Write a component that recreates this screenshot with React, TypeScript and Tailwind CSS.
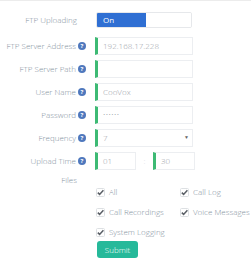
import React from "react";

const Info = () => (
  <span className="ml-[2px] inline-flex h-[8px] w-[8px] items-center justify-center rounded-full bg-[#4f78bd] text-[6px] font-bold leading-none text-white">
    ?
  </span>
);

const Label = ({ text, info = true }: { text: string; info?: boolean }) => (
  <div className={`flex w-[86px] items-center justify-end whitespace-nowrap ${info ? "" : "pr-[9px]"}`}>
    <span>{text}</span>
    {info && <Info />}
  </div>
);

const Field = ({ children }: { children?: React.ReactNode }) => (
  <div className="flex h-[18px] w-[98px] items-center border border-[#eceef1] border-l-[3px] border-l-[#3dba74] bg-white pl-[5px] text-[8px] text-[#9aa1a8]">
    {children}
  </div>
);

const Check = ({ text }: { text: string }) => (
  <div className="flex items-center gap-[4px] whitespace-nowrap">
    <svg width="9" height="9" viewBox="0 0 9 9">
      <rect x="0.5" y="0.5" width="8" height="8" rx="1" fill="#fff" stroke="#dde0e3" />
      <path d="M1.8 4.6 L3.6 6.4 L7.4 2.2" fill="none" stroke="#5a5f66" strokeWidth="1.5" />
    </svg>
    <span>{text}</span>
  </div>
);

export default function App() {
  return (
    <div className="h-[259px] w-[251px] overflow-hidden border-t border-[#ececec] bg-white text-[8px] font-light text-[#8592a0]" style={{ fontFamily: '"Open Sans", sans-serif' }}>
      <div className="flex flex-col pt-[10px]">
        <div className="flex h-[18px] items-center">
          <Label text="FTP Uploading" info={false} />
          <div className="ml-[10px] flex h-[16px] w-[96px] overflow-hidden rounded-[2px] border border-[#e6e8eb]">
            <div className="flex w-[49px] items-center bg-[#2f6fd3] pl-[6px] text-[8px] font-normal text-white">On</div>
            <div className="flex-1 bg-white" />
          </div>
        </div>
        <div className="mt-[8px] flex flex-col gap-[5px]">
          <div className="flex h-[18px] items-center">
            <Label text="FTP Server Address" />
            <div className="ml-[9px]"><Field>192.168.17.228</Field></div>
          </div>
          <div className="flex h-[18px] items-center">
            <Label text="FTP Server Path" />
            <div className="ml-[9px]"><Field /></div>
          </div>
          <div className="flex h-[18px] items-center">
            <Label text="User Name" />
            <div className="ml-[9px]"><Field>CooVox</Field></div>
          </div>
          <div className="flex h-[18px] items-center">
            <Label text="Password" />
            <div className="ml-[9px]"><Field><span className="text-[6px] tracking-[0.5px]">••••••</span></Field></div>
          </div>
          <div className="flex h-[18px] items-center">
            <Label text="Frequency" />
            <div className="ml-[9px]">
              <Field>
                <span className="flex-1">7</span>
                <span className="pr-[3px] text-[5px] text-[#666]">▼</span>
              </Field>
            </div>
          </div>
          <div className="flex h-[18px] items-center">
            <Label text="Upload Time" />
            <div className="ml-[9px] flex items-center">
              <div className="flex h-[18px] w-[41px] items-center border border-[#eceef1] border-l-[3px] border-l-[#3dba74] pl-[5px] text-[#9aa1a8]">01</div>
              <span className="w-[17px] text-center text-[#d0d4d8]">:</span>
              <div className="flex h-[18px] w-[42px] items-center border border-[#eceef1] border-l-[3px] border-l-[#3dba74] pl-[5px] text-[#9aa1a8]">30</div>
            </div>
          </div>
        </div>
        <div className="mt-[4px] flex h-[12px] items-center">
          <Label text="Files" info={false} />
        </div>
        <div className="ml-[96px] grid grid-cols-[84px_auto] gap-y-[8px]">
          <Check text="All" />
          <Check text="Call Log" />
          <Check text="Call Recordings" />
          <Check text="Voice Messages" />
          <Check text="System Logging" />
        </div>
        <div className="ml-[97px] mt-[3px]">
          <button className="h-[17px] w-[41px] rounded-[3px] bg-[#26b99a] text-[8px] font-light text-white">Submit</button>
        </div>
      </div>
    </div>
  );
}
